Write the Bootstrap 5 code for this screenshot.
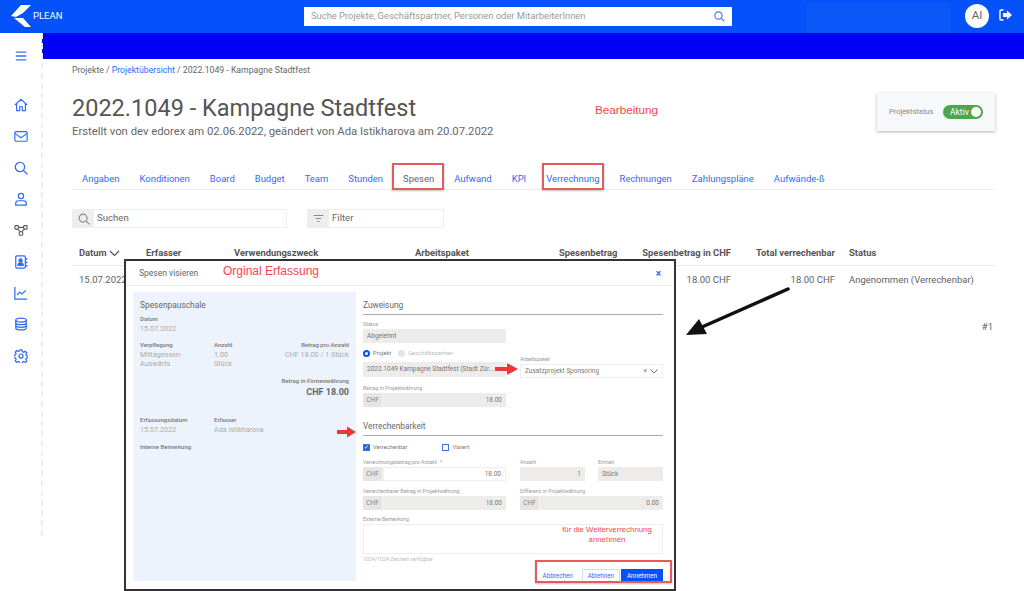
<!DOCTYPE html>
<html lang="de"><head><meta charset="utf-8"><title>PLEAN</title>
<link href="https://cdn.jsdelivr.net/npm/bootstrap@5.3.0/dist/css/bootstrap.min.css" rel="stylesheet">
<style>
html,body{height:591px;overflow:hidden}
body{position:relative;font-family:Roboto,"Liberation Sans",sans-serif;color:#5f5f5f;font-size:11px;background:#fff}
a{color:#2f6bf6;text-decoration:none}
.topbar{height:33px;background:#0552fb;position:relative}
.brand{width:304px;padding-left:11px;color:#fff;font-size:9.5px;gap:1px}
.searchbox{width:428px;height:19px;background:#fff;padding:0 7px;color:#9a9a9a;font-size:9.4px}
.patch{position:absolute;left:806px;top:3px;width:145px;height:30px;background:#0a56f6}
.avatar{width:24px;height:24px;border-radius:50%;background:#fff;color:#666;font-size:11.5px;position:absolute;left:965px;top:4px}
.logout{position:absolute;left:999px;top:9px}
.subbar{height:26px;background:#0000f5;margin-left:42px}
.shell{height:532px}
.sidenav{width:43px;height:503px;margin-top:-26px;border-right:2px dashed #eee;padding-top:6px;flex:none}
.sidenav svg{display:block;width:14px;height:14px}
.navcell{height:31.3px;display:flex;align-items:center}
.navcell.first{height:33px;margin-bottom:17.5px}
.mainpane{padding:0 29px 0 29px;flex:1;min-width:0}
.crumbs{font-size:8.7px;margin-top:5px;height:12px;line-height:12px;color:#666}
.pagetitle{font-size:23.5px;line-height:30px;margin:17px 0 0;font-weight:400;color:#555}
.subtitle{font-size:11.3px;line-height:14px;margin-top:2px;color:#666}
.headrow{height:74px;position:relative}
.statusbox{position:absolute;right:0;top:0;width:118px;height:38px;background:#f7f8f9;box-shadow:0 1px 3px rgba(0,0,0,.3);padding:0 12px;font-size:7.5px;color:#888}
.switchy{width:40px;height:14px;background:#4ca64c;border-radius:7px;color:#fff;font-size:8.5px;padding:0 2px 0 7px}
.switchy i{width:10px;height:10px;background:#fff;border-radius:50%;display:block}
.tabrow{border-bottom:1px solid #eee;height:23px;gap:20px;padding-left:10px;font-size:9.47px;line-height:24px;margin:0}
.tabrow .on{color:#666}
.tools{margin-top:19px;gap:20px}
.toolgrp{height:19px;border:1px solid #eee;font-size:9.6px;color:#666}
.toolgrp span.ic{width:21px;background:#eee;margin:-1px 0}
.toolgrp .tx{padding:0 3px}
.grid{table-layout:fixed;width:100%;margin-top:14px;font-size:9.5px;color:#5f5f5f}
.grid th{height:23px;padding:0 7px;border-bottom:1px solid #e8e8e8;font-weight:700;color:#555;white-space:nowrap;font-size:9.4px}
.grid td{padding:7px 7px;height:28px;white-space:nowrap;border:0}
.rowno{text-align:right;font-size:9.5px;color:#666;margin:26px 2px 0 0}
.dlg{position:absolute;left:124px;top:259px;width:552px;height:332px;background:#fff;border:2px solid #333;z-index:5}
.dlghead{height:25px;border-bottom:1px solid #eee;padding:0 13px;font-size:8.5px;color:#666}
.dlghead b{color:#2f6bf6;font-size:10px;margin-left:auto}
.dlgbody{padding:6px 11px 0 7px;gap:7px}
.infopanel{width:223px;height:289px;background:#edf3fc;padding:7px;flex:none}
.infopanel h6{font-size:8.4px;font-weight:400;margin:0 0 4px;line-height:12px;color:#666}
.lab{font-size:6px;line-height:8px;color:#777;font-weight:500}
.val{font-size:7.2px;line-height:9px;color:#aaa;margin-top:1px}
.tri{display:grid;grid-template-columns:74px 50px 1fr}
.lab.r,.val.r{text-align:right}
.formpane{width:300px;flex:none;padding-top:7px}
.sect{font-size:8.3px;line-height:12px;color:#666;border-bottom:1px solid #aaa;padding-bottom:3px;margin:0}
.flab{font-size:5.3px;line-height:7px;color:#999;margin:0;display:block}
.fbox{height:14px;background:#edecea;font-size:6.5px;color:#777;padding:0 4px;border:0;border-radius:0;min-height:0;line-height:14px}
.fbox.white{background:#fff;border:1px solid #eee;line-height:12px}
.fbox.ar{text-align:right}
.grp{display:flex;width:143px}
.grp .pre{width:20px;height:14px;background:#e6e5e3;font-size:6.5px;line-height:14px;text-align:center;color:#888;flex:none;border-right:1px solid #f5f5f5}
.grp .fbox{flex:1;min-width:0;width:auto}
.cols{display:flex;gap:14px}
.cols>div{width:143px}
.dot{width:7px;height:7px;border-radius:50%;border:2px solid #0552fb;background:#fff;display:inline-block}
.dot.off{border:0;background:#e4e4e4}
.optrow{font-size:5.8px;color:#777;gap:3px;height:10px}
.chk{width:7px;height:7px;display:inline-flex;align-items:center;justify-content:center;border:1px solid #3b72e6;font-size:6px;line-height:1;color:#fff}
.chk.full{background:#2460de}
.area{height:30px;border:1px solid #eee;position:relative}
.hint{font-size:5.3px;color:#bbb;line-height:8px;margin-top:1px}
.actions{gap:1px;margin-top:6px}
.act{height:14px;padding:0 5px;border-radius:0;font-size:6.3px;line-height:12px;border:1px solid transparent}
.act.ghost{color:#2f6bf6;background:none;margin-right:2px}
.act.line{color:#2f6bf6;border-color:#cfdcf8;background:#fff}
.act.solid{color:#fff;background:#0552fb;width:42px;padding:0}
.redbox{position:absolute;border:2px solid #e8595b;box-shadow:0 1px 2px rgba(0,0,0,.25);z-index:7}
.note{position:absolute;font-family:"Liberation Sans",Arial,sans-serif;color:#f2474b;z-index:7;white-space:nowrap}
.overlaysvg{position:absolute;left:0;top:0;width:1024px;height:591px;z-index:6;pointer-events:none}
</style></head><body>
<header class="topbar d-flex align-items-center">
  <div class="brand d-flex align-items-center">
    <svg width="21" height="23" viewBox="0 0 21 23"><path fill="#fff" d="M0 11 10 0h10l-8 8-7 4zM3 13h9l8 9h-6z"/></svg>
    <span>PLEAN</span>
  </div>
  <div class="searchbox d-flex align-items-center justify-content-between">
    <span>Suche Projekte, Geschäftspartner, Personen oder MitarbeiterInnen</span>
    <svg width="11" height="11" viewBox="0 0 16 16" fill="none" stroke="#3b78f0" stroke-width="1.6"><circle cx="6.5" cy="6.5" r="5.3"/><path d="M10.5 10.5 15 15"/></svg>
  </div>
  <div class="patch"></div>
  <div class="avatar d-flex align-items-center justify-content-center">AI</div>
  <svg class="logout" width="13" height="12" viewBox="0 0 13 12"><path d="M4.5 1H2Q1 1 1 2v8q0 1 1 1h2.500" fill="none" stroke="#fff" stroke-width="1.400"/><path fill="#fff" d="M8 1.500 13 6 8 10.500V8H4V4h4z"/></svg>
</header>
<div class="subbar"></div>
<div class="shell d-flex">
  <nav class="sidenav d-flex flex-column align-items-center">
    <div class="navcell first"><svg viewBox="0 0 16 16" fill="none" stroke="#3a74f2" stroke-width="1.500"><path d="M2 3.500h12M2 8h12M2 12.500h12"/></svg></div>
    <div class="navcell"><svg viewBox="0 0 16 16" fill="none" stroke="#2f6bf6" stroke-width="1.300"><path d="M1 8 8 1.500 15 8M3 6.500V14.500H6.500V10h3v4.500H13V6.500"/></svg></div>
    <div class="navcell"><svg viewBox="0 0 16 16" fill="none" stroke="#2f6bf6" stroke-width="1.300"><rect x="1" y="3" width="14" height="11" rx="1.500"/><path d="m1 5 7 5 7-5"/></svg></div>
    <div class="navcell"><svg viewBox="0 0 16 16" fill="none" stroke="#2f6bf6" stroke-width="1.500"><circle cx="6.800" cy="6.800" r="5.300"/><path d="m10.800 10.800 4.500 4.500"/></svg></div>
    <div class="navcell"><svg viewBox="0 0 16 16" fill="none" stroke="#2f6bf6" stroke-width="1.400"><circle cx="8" cy="4.500" r="3"/><path d="M2 15v-2q0-3 3-3h6q3 0 3 3v2z"/></svg></div>
    <div class="navcell"><svg viewBox="0 0 16 16" fill="none" stroke="#555" stroke-width="1.200"><rect x="1" y="3" width="4" height="4" rx="1"/><rect x="11" y="3" width="4" height="4" rx="1"/><rect x="6" y="10" width="4" height="4" rx="1"/><path d="M5 5h6M4 7l3 3M12 7l-3 3"/></svg></div>
    <div class="navcell"><svg viewBox="0 0 16 16" fill="none" stroke="#2f6bf6" stroke-width="1.400"><rect x="2" y="1" width="11" height="14" rx="1.500"/><circle cx="7.500" cy="6.300" r="1.800" fill="#2f6bf6"/><path d="M4.500 12q0-3 3-3t3 3z" fill="#2f6bf6"/><path d="M14.500 3.500v2M14.500 7.500v2M14.500 11.500v2"/></svg></div>
    <div class="navcell"><svg viewBox="0 0 16 16" fill="none" stroke="#2f6bf6" stroke-width="1.400"><path d="M1 1v14h14M3.500 10.500l3-3.500 2.500 2 4.500-4"/></svg></div>
    <div class="navcell"><svg viewBox="0 0 16 16" fill="none" stroke="#2f6bf6" stroke-width="1.400"><ellipse cx="8" cy="3.500" rx="6" ry="2.300"/><path d="M2 3.500v9c0 1.300 2.700 2.300 6 2.300s6-1 6-2.300v-9M2 6.500c0 1.300 2.700 2.300 6 2.300s6-1 6-2.300M2 9.500c0 1.300 2.700 2.300 6 2.300s6-1 6-2.300"/></svg></div>
    <div class="navcell"><svg viewBox="0 0 16 16" fill="none" stroke="#2f6bf6" stroke-width="1.400"><circle cx="8" cy="8" r="2.300"/><path d="M6.800 1h2.400l.4 2 1.500.7 1.800-1 1.700 1.700-1 1.800.7 1.500 2 .4v1.800l-2 .4-.7 1.500 1 1.800-1.700 1.700-1.800-1-1.500.7-.4 2H6.800l-.4-2-1.500-.7-1.800 1-1.700-1.700 1-1.800-.7-1.500-2-.4V7.200l2-.4.7-1.500-1-1.800 1.700-1.700 1.800 1 1.500-.7z"/></svg></div>
  </nav>
  <main class="mainpane">
    <div class="crumbs">Projekte / <a href="#">Projektübersicht</a> / 2022.1049 - Kampagne Stadtfest</div>
    <div class="headrow">
      <h1 class="pagetitle">2022.1049 - Kampagne Stadtfest</h1>
      <div class="subtitle">Erstellt von dev edorex am 02.06.2022, geändert von Ada Istikharova am 20.07.2022</div>
      <div class="statusbox d-flex align-items-center justify-content-between">
        <span>Projektstatus</span><span class="switchy d-flex align-items-center justify-content-between">Aktiv<i></i></span>
      </div>
    </div>
    <div class="tabrow d-flex">
      <a href="#">Angaben</a><a href="#">Konditionen</a><a href="#">Board</a><a href="#">Budget</a><a href="#">Team</a><a href="#">Stunden</a><a href="#" class="on">Spesen</a><a href="#">Aufwand</a><a href="#">KPI</a><a href="#">Verrechnung</a><a href="#">Rechnungen</a><a href="#">Zahlungspläne</a><a href="#">Aufwände-ß</a>
    </div>
    <div class="tools d-flex">
      <div class="toolgrp d-flex align-items-center" style="width:215px"><span class="ic d-flex align-items-center justify-content-center align-self-stretch"><svg width="12" height="12" viewBox="0 0 16 16" fill="none" stroke="#888" stroke-width="1.500"><circle cx="6.800" cy="6.800" r="5.300"/><path d="m10.800 10.800 4.500 4.500"/></svg></span><span class="tx">Suchen</span></div>
      <div class="toolgrp d-flex align-items-center" style="width:137px"><span class="ic d-flex align-items-center justify-content-center align-self-stretch"><svg width="11" height="11" viewBox="0 0 16 16" fill="none" stroke="#888" stroke-width="1.500"><path d="M1 3.500h14M4 8h8M6.500 12.500h3"/></svg></span><span class="tx">Filter</span></div>
    </div>
    <table class="grid">
      <colgroup><col style="width:67px"><col style="width:88px"><col style="width:181px"><col style="width:144px"><col style="width:83px"><col style="width:103px"><col style="width:104px"><col></colgroup>
      <thead><tr><th>Datum <svg width="11" height="7" viewBox="0 0 11 7" fill="none" stroke="#555" stroke-width="1.200"><path d="m1 1 4.500 4.500L10 1"/></svg></th><th>Erfasser</th><th>Verwendungszweck</th><th>Arbeitspaket</th><th>Spesenbetrag</th><th class="text-end">Spesenbetrag in CHF</th><th class="text-end">Total verrechenbar</th><th>Status</th></tr></thead>
      <tbody><tr><td>15.07.2022</td><td></td><td></td><td></td><td></td><td class="text-end">18.00 CHF</td><td class="text-end">18.00 CHF</td><td>Angenommen (Verrechenbar)</td></tr></tbody>
    </table>
    <div class="rowno">#1</div>
  </main>
</div>

<section class="dlg">
  <div class="dlghead d-flex align-items-center"><span>Spesen visieren</span><b>×</b></div>
  <div class="dlgbody d-flex">
    <div class="infopanel">
      <h6>Spesenpauschale</h6>
      <div class="lab">Datum</div><div class="val">15.07.2022</div>
      <div class="tri" style="margin-top:8px">
        <div><div class="lab">Verpflegung</div><div class="val">Mittagessen-<br>Auswärts</div></div>
        <div><div class="lab">Anzahl</div><div class="val">1.00<br>Stück</div></div>
        <div><div class="lab r">Betrag pro Anzahl</div><div class="val r">CHF 18.00 / 1 Stück</div></div>
      </div>
      <div class="lab r" style="margin-top:9px">Betrag in Firmenwährung</div>
      <div class="text-end fw-bold" style="font-size:9px;line-height:12px;margin-top:1px;color:#666">CHF 18.00</div>
      <div class="tri" style="margin-top:18px">
        <div><div class="lab">Erfassungsdatum</div><div class="val">15.07.2022</div></div>
        <div style="grid-column:span 2"><div class="lab">Erfasser</div><div class="val">Ada Istikharova</div></div>
      </div>
      <div class="lab" style="margin-top:9px">Interne Bemerkung</div>
    </div>
    <div class="formpane">
      <h6 class="sect fw-normal">Zuweisung</h6>
      <label class="flab" style="margin-top:6px">Status</label>
      <div class="fbox" style="width:143px;margin-top:1px">Abgelehnt</div>
      <div class="optrow d-flex align-items-center" style="margin-top:5px"><span class="dot"></span><span>Projekt</span><span class="dot off ms-1"></span><span style="color:#bbb">Geschäftspartner</span></div>
      <div class="cols" style="margin-top:-2px">
        <div style="padding-top:6px"><div class="fbox" style="height:15px;line-height:15px;overflow:hidden;white-space:nowrap">2022.1049 Kampagne Stadtfest (Stadt Zür...</div></div>
        <div><label class="flab">Arbeitspaket</label><div class="fbox white d-flex justify-content-between align-items-center" style="margin-top:1px"><span>Zusatzprojekt Sponsoring</span><span class="d-flex align-items-center" style="gap:3px">×<svg width="8" height="5" viewBox="0 0 8 5" fill="none" stroke="#777"><path d="m.5.5 3.500 3.500L7.500.5"/></svg></span></div></div>
      </div>
      <label class="flab" style="margin-top:7px">Betrag in Projektwährung</label>
      <div class="grp" style="margin-top:1px"><span class="pre">CHF</span><div class="fbox ar">18.00</div></div>
      <h6 class="sect fw-normal" style="margin-top:13px">Verrechenbarkeit</h6>
      <div class="optrow d-flex align-items-center" style="margin-top:6px"><span class="chk full">✓</span><span>Verrechenbar</span><span class="chk" style="margin-left:32px"></span><span>Visiert</span></div>
      <div class="cols" style="margin-top:7px">
        <div><label class="flab">Verrechnungsbetrag pro Anzahl &nbsp;*</label><div class="grp" style="margin-top:1px"><span class="pre">CHF</span><div class="fbox white ar">18.00</div></div></div>
        <div class="d-flex" style="gap:13px">
          <div style="width:65px"><label class="flab">Anzahl</label><div class="fbox ar" style="margin-top:1px">1</div></div>
          <div style="width:65px"><label class="flab">Einheit</label><div class="fbox" style="margin-top:1px">Stück</div></div>
        </div>
      </div>
      <div class="cols" style="margin-top:7px">
        <div><label class="flab">Verrechenbarer Betrag in Projektwährung</label><div class="grp" style="margin-top:1px"><span class="pre">CHF</span><div class="fbox ar">18.00</div></div></div>
        <div><label class="flab">Differenz in Projektwährung</label><div class="grp" style="margin-top:1px"><span class="pre">CHF</span><div class="fbox ar">0.00</div></div></div>
      </div>
      <label class="flab" style="margin-top:6px">Externe Bemerkung</label>
      <div class="area" style="margin-top:1px"></div>
      <div class="hint">1024/1024 Zeichen verfügbar</div>
      <div class="actions d-flex justify-content-end">
        <button class="act ghost btn">Abbrechen</button><button class="act line btn">Ablehnen</button><button class="act solid btn">Annehmen</button>
      </div>
    </div>
  </div>
</section>

<svg class="overlaysvg" viewBox="0 0 1024 591">
  <path d="M788 289 702 327" stroke="#111" stroke-width="3.500" fill="none" stroke-linecap="round"/>
  <path fill="#111" d="M686 335 699 319 707 334z"/>
  <path fill="#e8393b" d="M337 430h10v-3.500l9 5.500-9 5.500V434h-10zM495 367h12v-4l11 6-11 6v-4h-12z"/>
</svg>
<div class="redbox" style="left:392px;top:163px;width:52px;height:27px"></div>
<div class="redbox" style="left:542px;top:163px;width:62px;height:27px"></div>
<div class="redbox" style="left:535px;top:560px;width:137px;height:23px"></div>
<div class="note" style="left:595px;top:103px;font-size:11.7px;line-height:14px">Bearbeitung</div>
<div class="note" style="left:223px;top:264px;font-size:12px;line-height:14px">Orginal Erfassung</div>
<div class="note text-center" style="left:552px;top:525px;width:110px;font-size:7.8px;line-height:9.500px">für die Weiterverrechnung<br>annehmen</div>
<script src="https://cdn.jsdelivr.net/npm/bootstrap@5.3.0/dist/js/bootstrap.bundle.min.js"></script>
</body></html>
